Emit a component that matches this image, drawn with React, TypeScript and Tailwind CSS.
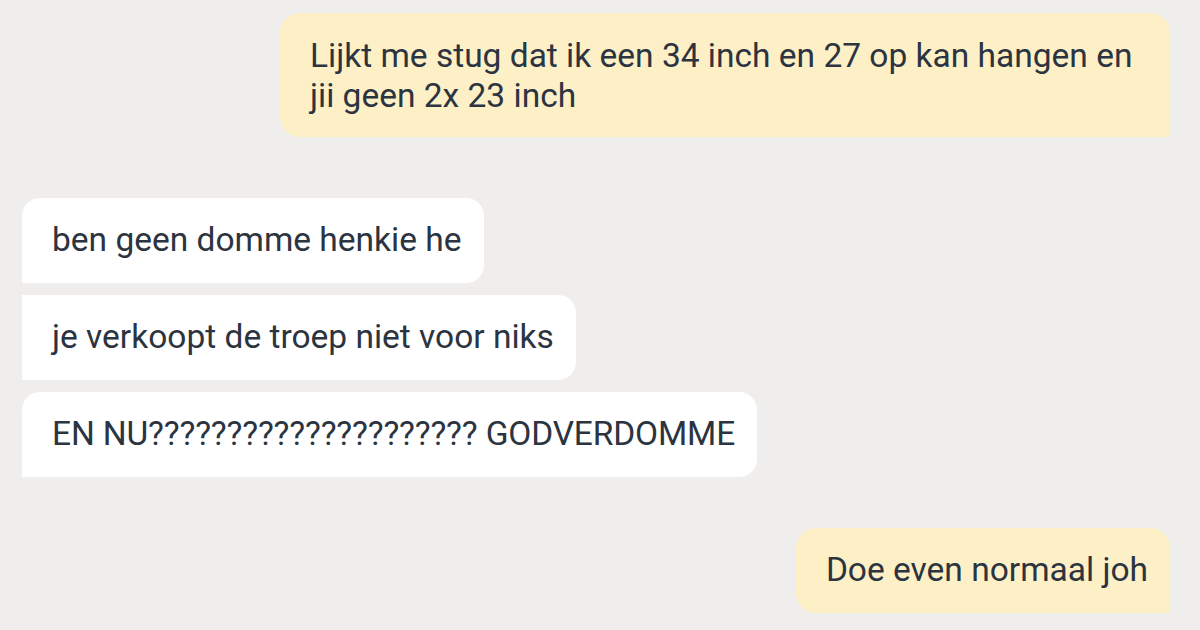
import React from 'react';

type Side = 'me' | 'them';

interface Bubble {
  side: Side;
  text: string;
  shape: string;
  extra?: string;
}

const font = { fontFamily: 'Roboto, "Noto Sans", sans-serif' };

function ChatBubble({ side, text, shape, extra }: Bubble) {
  const color = side === 'me' ? 'bg-[#fef0c6]' : 'bg-white';
  const pad = extra ?? 'pt-[22px] pb-[23px]';
  return (
    <div className={`${color} ${shape} ${pad} pl-[30px] pr-[22px] text-[33.5px] leading-[40px] text-[#2b3440]`}>
      {text}
    </div>
  );
}

export default function App() {
  return (
    <div
      className="w-[1200px] h-[630px] bg-[#efeeec] overflow-hidden flex flex-col pt-[13px]"
      style={font}
    >
      <div className="flex justify-end pr-[30px]">
        <ChatBubble
          side="me"
          text="Lijkt me stug dat ik een 34 inch en 27 op kan hangen en jii geen 2x 23 inch"
          shape="rounded-tl-[20px] rounded-tr-[20px] rounded-bl-[20px]"
          extra="w-[890px] pt-[23px] pb-[21px]"
        />
      </div>

      <div className="flex flex-col items-start gap-[12px] pl-[22px] mt-[61px]">
        <ChatBubble
          side="them"
          text="ben geen domme henkie he"
          shape="rounded-tl-[18px] rounded-tr-[18px] rounded-br-[18px]"
        />
        <ChatBubble
          side="them"
          text="je verkoopt de troep niet voor niks"
          shape="rounded-tr-[18px] rounded-br-[18px]"
        />
        <ChatBubble
          side="them"
          text="EN NU????????????????????? GODVERDOMME"
          shape="rounded-tl-[18px] rounded-tr-[18px] rounded-br-[18px]"
          extra="pt-[22px] pb-[23px] tracking-[-0.15px]"
        />
      </div>

      <div className="flex justify-end pr-[30px] mt-[51px]">
        <ChatBubble
          side="me"
          text="Doe even normaal joh"
          shape="rounded-tl-[20px] rounded-tr-[20px] rounded-bl-[20px]"
        />
      </div>
    </div>
  );
}
